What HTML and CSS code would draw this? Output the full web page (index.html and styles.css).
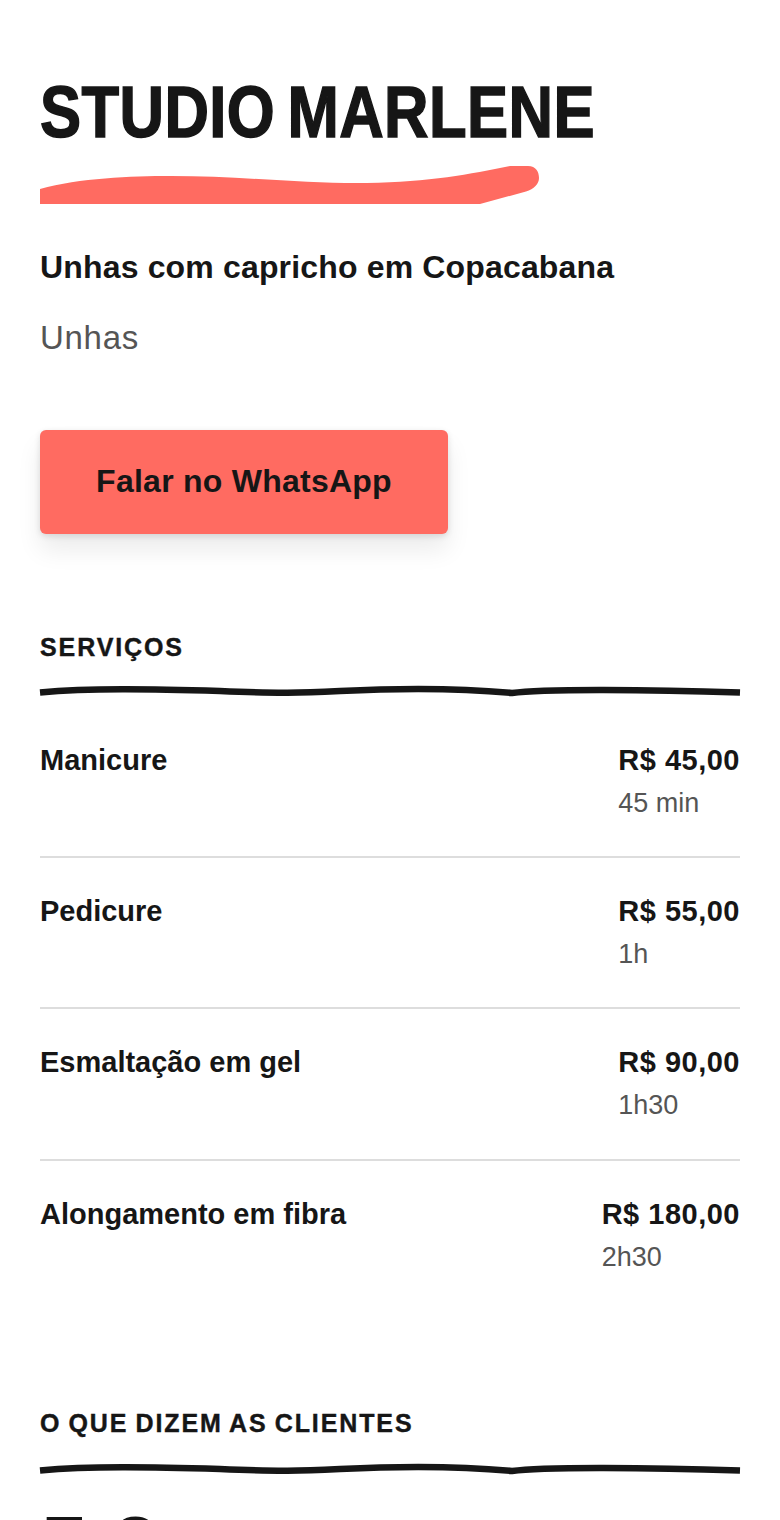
FILE: index.html
```html
<!DOCTYPE html>
<html lang="pt-BR">
<head>
  <meta charset="UTF-8" />
  <meta name="viewport" content="width=device-width, initial-scale=1.0"/>
  <title>Studio Marlene</title>
  <link rel="stylesheet" href="styles.css">
</head>
<body>
  <header class="hero">
    <h1 class="brand">STUDIO MARLENE</h1>
    <svg class="brush" width="500" height="38" viewBox="0 0 500 38">
      <path fill="#ff6b61" d="M0 23 C40 12 90 10 131 10 C200 10 270 18 327 17 C390 16 430 8 470 0 L488 0 C496 0 499 6 499 12 C499 18 494 23 486 25.500 L440 38 L0 38 Z"/>
    </svg>
    <p class="tagline">Unhas com capricho em Copacabana</p>
    <p class="category">Unhas</p>
    <a class="cta" href="#">Falar no WhatsApp</a>
  </header>

  <section class="services">
    <h2 class="section-title">SERVIÇOS</h2>
    <svg class="wavy" width="700" height="10" viewBox="0 0 700 10" preserveAspectRatio="none">
      <path fill="none" stroke="#161616" stroke-width="6.500" d="M0 5.500 C50 1 110 2 180 4 C240 6.500 260 6 300 4 C360 1 420 1 472 6 C500 2 600 2 700 5.500"/>
    </svg>
    <ul class="service-list">
      <li class="service">
        <span class="service-name">Manicure</span>
        <div class="service-info"><span class="price">R$ 45,00</span><span class="duration">45 min</span></div>
      </li>
      <li class="service">
        <span class="service-name">Pedicure</span>
        <div class="service-info"><span class="price">R$ 55,00</span><span class="duration">1h</span></div>
      </li>
      <li class="service">
        <span class="service-name">Esmaltação em gel</span>
        <div class="service-info"><span class="price">R$ 90,00</span><span class="duration">1h30</span></div>
      </li>
      <li class="service">
        <span class="service-name">Alongamento em fibra</span>
        <div class="service-info"><span class="price">R$ 180,00</span><span class="duration">2h30</span></div>
      </li>
    </ul>
  </section>

  <section class="reviews">
    <h2 class="section-title">O QUE DIZEM AS CLIENTES</h2>
    <svg class="wavy" width="700" height="10" viewBox="0 0 700 10" preserveAspectRatio="none">
      <path fill="none" stroke="#161616" stroke-width="6.500" d="M0 5.500 C50 1 110 2 180 4 C240 6.500 260 6 300 4 C360 1 420 1 472 6 C500 2 600 2 700 5.500"/>
    </svg>
    <p class="review-name">TC</p>
  </section>
</body>
</html>
```

FILE: styles.css
```css
* {
  box-sizing: border-box;
}

html, body {
  height: 1520px;
  overflow: hidden;
}

body {
  margin: 0;
  padding: 0 40px;
  background-color: #fff;
  color: #161616;
  font-family: "Liberation Sans", Arial, sans-serif;
}

.hero {
  padding-top: 70px;
}

.brand {
  margin: 0;
  font-size: 72px;
  font-weight: 700;
  line-height: 84px;
  letter-spacing: 0.5px;
  word-spacing: -6px;
  white-space: nowrap;
  -webkit-text-stroke: 1.5px #161616;
  transform: scaleX(0.855);
  transform-origin: left center;
}

.brush {
  display: block;
  margin-top: 12px;
}

.tagline {
  margin: 43px 0 0;
  font-size: 32px;
  font-weight: 700;
  line-height: 40px;
  letter-spacing: 0.16px;
}

.category {
  margin: 31px 0 0;
  font-size: 33px;
  line-height: 40px;
  letter-spacing: 0.7px;
  color: #555;
}

.cta {
  display: block;
  width: 408px;
  height: 104px;
  margin-top: 72px;
  border-radius: 6px;
  background-color: #ff6b61;
  color: #161616;
  font-size: 32px;
  font-weight: 700;
  line-height: 102px;
  letter-spacing: 0.25px;
  text-align: center;
  text-decoration: none;
  box-shadow: 0 16px 24px rgba(0,0,0,0.08), 0 2px 6px rgba(0,0,0,0.12);
}

.services {
  padding-top: 96px;
}

.reviews {
  padding-top: 94px;
}

.reviews .wavy {
  margin-top: 25px;
}

.section-title {
  margin: 0;
  font-size: 25px;
  font-weight: 700;
  line-height: 34px;
  letter-spacing: 1.9px;
  word-spacing: -1.7px;
  -webkit-text-stroke: 0.4px #161616;
}

.wavy {
  display: block;
  margin-top: 23px;
  overflow: visible;
}

.service-list {
  margin: 10px 0 0;
  padding: 0;
  list-style: none;
}

.service {
  display: flex;
  justify-content: space-between;
  align-items: flex-start;
  height: 151.200px;
  padding-top: 35px;
  border-bottom: 2px solid #ddd;
}

.service:last-child {
  border-bottom: none;
}

.service-name, .price {
  font-size: 29px;
  font-weight: 700;
  line-height: 36px;
}

.price {
  letter-spacing: 0.5px;
}

.service-info {
  display: flex;
  flex-direction: column;
}

.duration {
  margin-top: 7px;
  font-size: 27px;
  line-height: 36px;
  color: #555;
}

.review-name {
  margin: 33.500px 0 0;
  padding-left: 6px;
  font-size: 60px;
  font-weight: 700;
  line-height: 60px;
  letter-spacing: 30px;
}
```
